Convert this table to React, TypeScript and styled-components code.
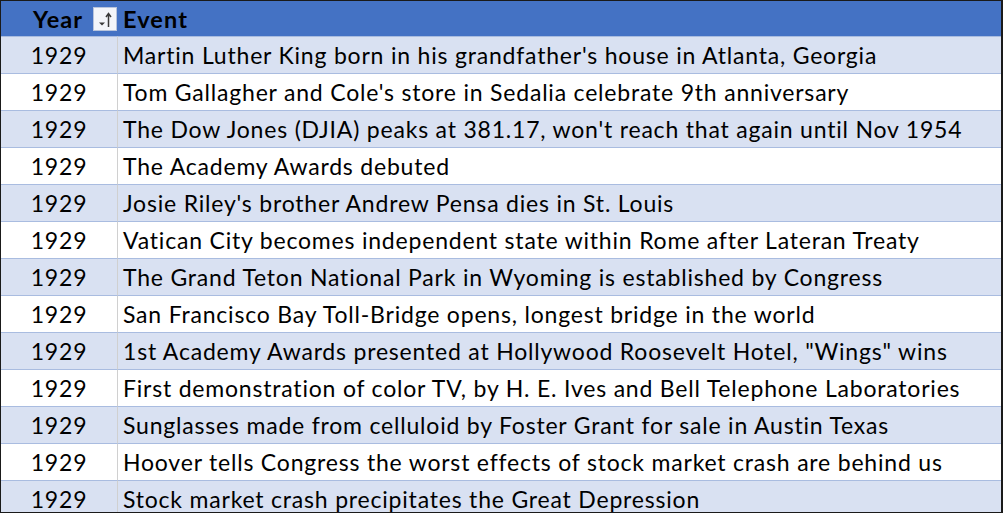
import React from 'react';
import styled, { createGlobalStyle } from 'styled-components';

const GlobalStyle = createGlobalStyle`
    html, body {
        margin: 0;
        padding: 0;
        background: #fff;
        overflow: hidden;
    }
`;

interface EventRow {
    year: number;
    event: string;
}

const rows: EventRow[] = [
    { year: 1929, event: "Martin Luther King born in his grandfather's house in Atlanta, Georgia" },
    { year: 1929, event: "Tom Gallagher and Cole's store in Sedalia celebrate 9th anniversary" },
    { year: 1929, event: 'The Dow Jones (DJIA) peaks at 381.17, won\'t reach that again until Nov 1954' },
    { year: 1929, event: 'The Academy Awards debuted' },
    { year: 1929, event: "Josie Riley's brother Andrew Pensa dies in St. Louis" },
    { year: 1929, event: 'Vatican City becomes independent state within Rome after Lateran Treaty' },
    { year: 1929, event: 'The Grand Teton National Park in Wyoming is established by Congress' },
    { year: 1929, event: 'San Francisco Bay Toll-Bridge opens, longest bridge in the world' },
    { year: 1929, event: '1st Academy Awards presented at Hollywood Roosevelt Hotel, "Wings" wins' },
    { year: 1929, event: 'First demonstration of color TV, by H. E. Ives and Bell Telephone Laboratories' },
    { year: 1929, event: 'Sunglasses made from celluloid by Foster Grant for sale in Austin Texas' },
    { year: 1929, event: 'Hoover tells Congress the worst effects of stock market crash are behind us' },
    { year: 1929, event: 'Stock market crash precipitates the Great Depression' },
];

const Frame = styled.div`
    width: 1003px;
    height: 513px;
    box-sizing: border-box;
    border: 1px solid #1a1a1a;
    border-right-width: 2px;
    overflow: hidden;
    font-family: Lato, 'Liberation Sans', sans-serif;
    font-size: 23px;
    letter-spacing: 0.8px;
    color: #000;
`;

const Grid = styled.div`
    display: grid;
    grid-template-columns: 117px 1fr;
`;

const HeaderCell = styled.div<{ $year?: boolean }>`
    height: 35px;
    background: #4472c4;
    display: flex;
    align-items: center;
    padding-left: ${(p) => (p.$year ? '32px' : '5px')};
    gap: 10px;
    font-weight: 700;
    font-size: 23.5px;
    letter-spacing: 1.1px;
    box-sizing: border-box;
`;

interface CellProps {
    $shaded: boolean;
    $year?: boolean;
}

const Cell = styled.div<CellProps>`
    height: 37px;
    box-sizing: border-box;
    background: ${(p) => (p.$shaded ? '#d9e1f2' : '#fff')};
    border-top: 1px solid #a9bce0;
    border-right: ${(p) => (p.$year ? '1px solid #d0d0d0' : 'none')};
    display: flex;
    align-items: center;
    justify-content: ${(p) => (p.$year ? 'center' : 'flex-start')};
    padding-left: ${(p) => (p.$year ? '0' : '5px')};
    white-space: nowrap;
`;

const FilterButton = styled.div`
    width: 24px;
    height: 24px;
    margin-top: 1px;
    box-sizing: border-box;
    background: #f3f5fa;
    border: 1px solid #b8c4dc;
    display: flex;
    align-items: center;
    justify-content: center;
`;

const SortIcon = () => (
    <svg width="20" height="20" viewBox="0 0 20 20">
        <path d="M4 13.5 L10 13.5 L7 16.5 Z" fill="#3a3a3a" />
        <path d="M13.5 18 L13.5 5 M11 8 L13.5 4.5 L16 8" stroke="#3a3a3a" strokeWidth="1.5" fill="none" />
    </svg>
);

const App = () => (
    <>
        <GlobalStyle />
        <Frame>
            <Grid>
                <HeaderCell $year>
                    Year
                    <FilterButton>
                        <SortIcon />
                    </FilterButton>
                </HeaderCell>
                <HeaderCell>Event</HeaderCell>
                {rows.map((row, i) => (
                    <React.Fragment key={i}>
                        <Cell $shaded={i % 2 === 0} $year>{row.year}</Cell>
                        <Cell $shaded={i % 2 === 0}>{row.event}</Cell>
                    </React.Fragment>
                ))}
            </Grid>
        </Frame>
    </>
);

export default App;
